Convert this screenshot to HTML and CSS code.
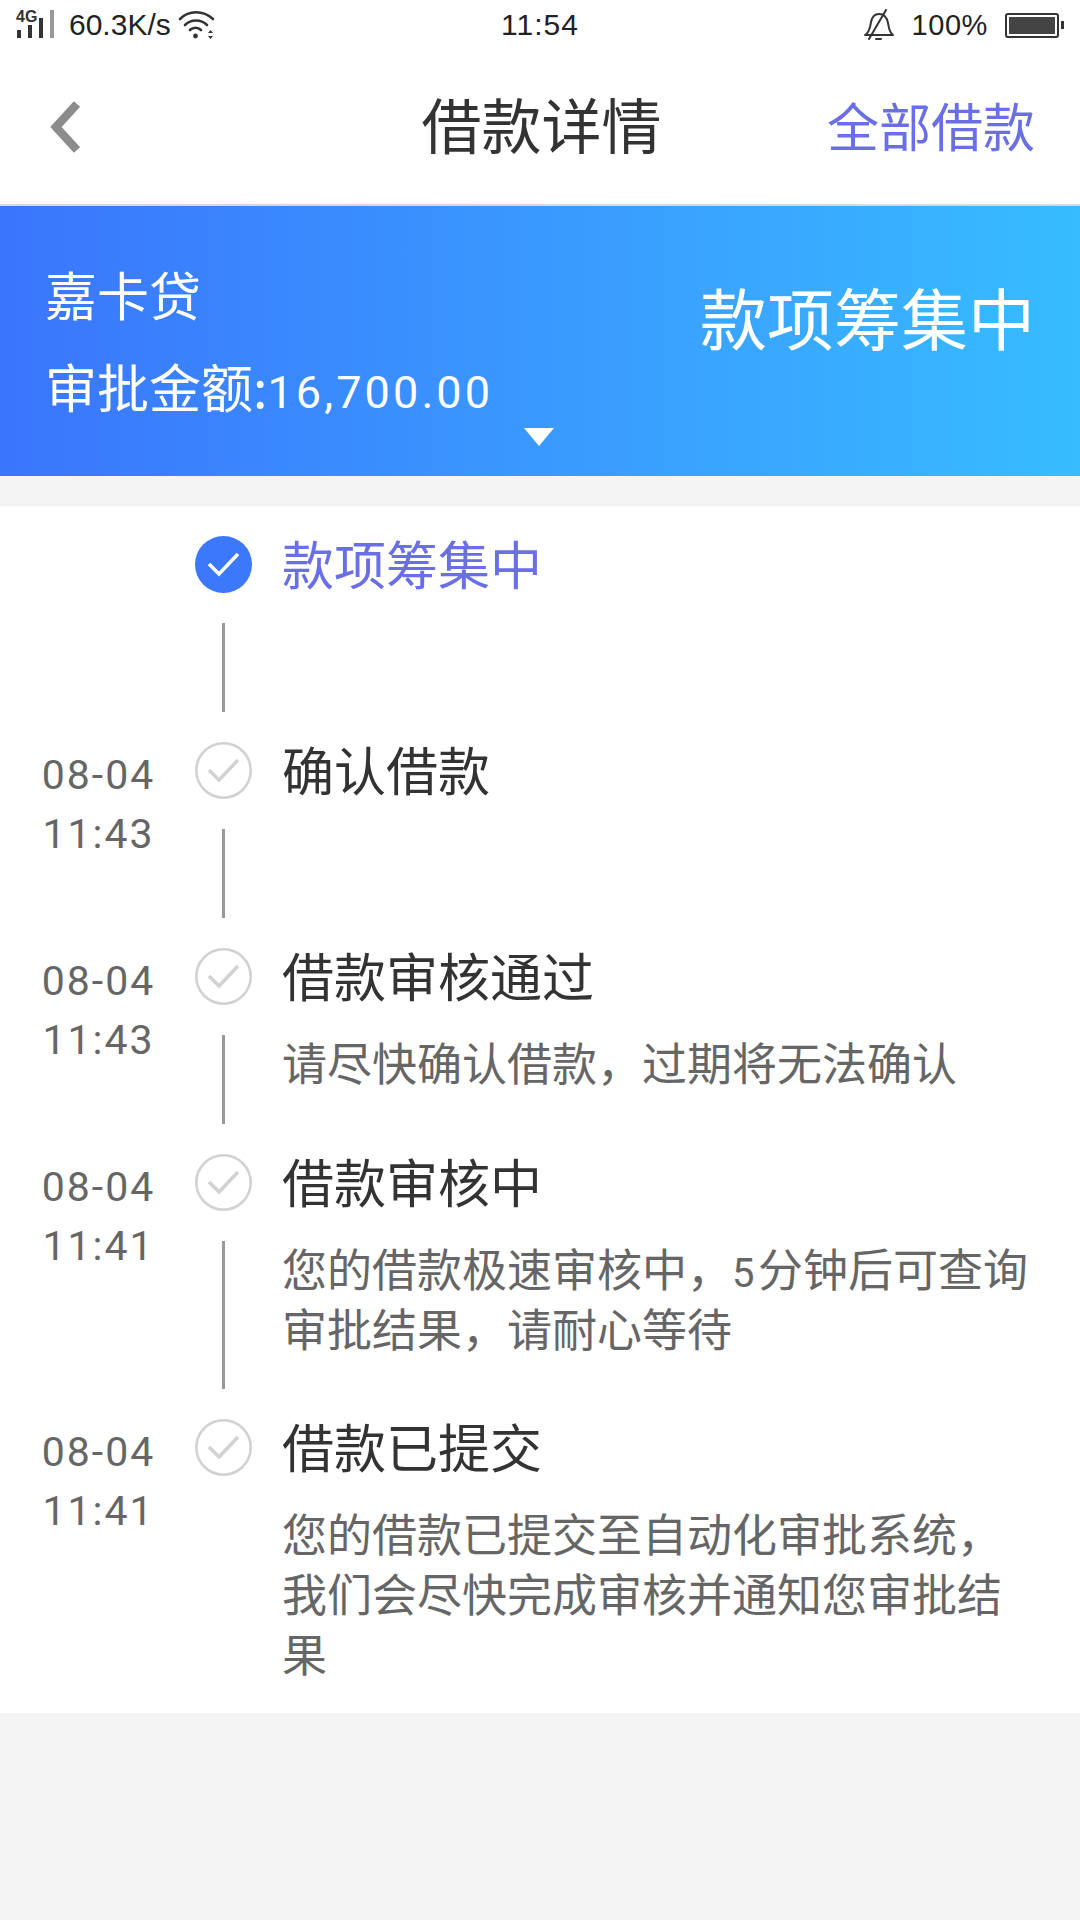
FILE: index.html
```html
<!DOCTYPE html>
<html lang="zh-CN">
<head>
<meta charset="utf-8">
<title>借款详情</title>
<link rel="stylesheet" href="styles.css">
</head>
<body>
<div class="status">
  <div class="status-left">
    <svg class="sig" width="42" height="32" viewBox="0 0 42 32"><text x="0" y="13" class="sig-t">4G</text><rect x="1" y="21" width="4" height="8" fill="#333"/><rect x="12" y="16" width="4" height="13" fill="#333"/><rect x="23" y="9" width="4" height="20" fill="#333"/><rect x="34" y="1" width="4" height="28" fill="#999"/></svg>
    <span class="speed">60.3K/s</span>
    <svg class="wifi" width="38" height="32" viewBox="0 0 38 32" fill="none" stroke="#333" stroke-width="2.6" stroke-linecap="round"><path d="M2 10 C11 1 25 1 35 10"/><path d="M7 16 C13 10 23 10 29 16"/><path d="M12 21 C15 18 20 18 23 21"/><circle cx="17.500" cy="27" r="2.400" fill="#333" stroke="none"/><path d="M30 24l2.500-3 2.500 3zM30 27l2.500 3 2.500-3z" fill="#333" stroke="none"/></svg>
  </div>
  <div class="clock">11:54</div>
  <div class="status-right">
    <svg width="30" height="32" viewBox="0 0 30 32" fill="none" stroke="#333" stroke-width="2" stroke-linecap="round" stroke-linejoin="round"><path d="M1 26 C6 23 6 18 7 13 C8 8 11 5 15 5 C20 5 23 9 24 14 C25 19 25 23 29 26 Z"/><path d="M12 30h5"/><path d="M22 1 L5 30" stroke-width="2"/></svg>
    <span class="pct">100%</span>
    <div class="batt"><div class="batt-fill"></div></div>
    <div class="nub"></div>
  </div>
</div>

<header class="nav">
  <svg class="back" width="34" height="54" viewBox="0 0 34 54" fill="none" stroke="#8c8c8c" stroke-width="8.500"><path d="M29 4 L8 27 L29 50"/></svg>
  <h1 class="title">借款详情</h1>
  <a class="all">全部借款</a>
</header>

<section class="banner">
  <div class="b-left">
    <div class="b-name">嘉卡贷</div>
    <div class="b-amt">审批金额:<span class="b-num">16,700.00</span></div>
  </div>
  <div class="b-state">款项筹集中</div>
  <div class="tri"></div>
</section>

<section class="list">
  <div class="item">
    <div class="time"></div>
    <div class="axis">
      <svg class="ico" viewBox="0 0 57 57"><circle cx="28.500" cy="28.500" r="28.500" fill="#3b78fb"/><path d="M14 28 L24 38 L43 18" fill="none" stroke="#fff" stroke-width="3.500"/></svg>
      <div class="line"></div>
    </div>
    <div class="body"><div class="head active">款项筹集中</div></div>
  </div>
  <div class="item">
    <div class="time">08-04<br>11:43</div>
    <div class="axis">
      <svg class="ico" viewBox="0 0 57 57"><circle cx="28.500" cy="28.500" r="27.200" fill="#fff" stroke="#d2d2d2" stroke-width="2.600"/><path d="M14 28 L24 38 L43 18" fill="none" stroke="#d2d2d2" stroke-width="3.500"/></svg>
      <div class="line"></div>
    </div>
    <div class="body"><div class="head">确认借款</div></div>
  </div>
  <div class="item">
    <div class="time">08-04<br>11:43</div>
    <div class="axis">
      <svg class="ico" viewBox="0 0 57 57"><circle cx="28.500" cy="28.500" r="27.200" fill="#fff" stroke="#d2d2d2" stroke-width="2.600"/><path d="M14 28 L24 38 L43 18" fill="none" stroke="#d2d2d2" stroke-width="3.500"/></svg>
      <div class="line"></div>
    </div>
    <div class="body"><div class="head">借款审核通过</div><p class="desc">请尽快确认借款，过期将无法确认</p></div>
  </div>
  <div class="item">
    <div class="time">08-04<br>11:41</div>
    <div class="axis">
      <svg class="ico" viewBox="0 0 57 57"><circle cx="28.500" cy="28.500" r="27.200" fill="#fff" stroke="#d2d2d2" stroke-width="2.600"/><path d="M14 28 L24 38 L43 18" fill="none" stroke="#d2d2d2" stroke-width="3.500"/></svg>
      <div class="line"></div>
    </div>
    <div class="body"><div class="head">借款审核中</div><p class="desc">您的借款极速审核中，<span class="digit">5</span>分钟后可查询审批结果，请耐心等待</p></div>
  </div>
  <div class="item last">
    <div class="time">08-04<br>11:41</div>
    <div class="axis">
      <svg class="ico" viewBox="0 0 57 57"><circle cx="28.500" cy="28.500" r="27.200" fill="#fff" stroke="#d2d2d2" stroke-width="2.600"/><path d="M14 28 L24 38 L43 18" fill="none" stroke="#d2d2d2" stroke-width="3.500"/></svg>
    </div>
    <div class="body"><div class="head">借款已提交</div><p class="desc">您的借款已提交至自动化审批系统，我们会尽快完成审核并通知您审批结果</p></div>
  </div>
</section>
</body>
</html>
```

FILE: styles.css
```css
* { box-sizing: border-box; }
html, body { margin: 0; padding: 0; }
body {
  width: 1080px;
  height: 1920px;
  background: #f4f4f4;
  font-family: "Noto Sans CJK SC", "Noto Sans", sans-serif;
  color: #333;
  overflow: hidden;
}

.status {
  height: 50px;
  background: #fff;
  display: grid;
  grid-template-columns: 1fr auto 1fr;
  align-items: center;
  padding: 0 16px;
  font-family: "Liberation Sans", Arial, sans-serif;
  font-size: 29px;
  color: #222;
}
.status-left, .status-right { display: flex; align-items: center; }
.status-right { justify-content: flex-end; }
.sig { overflow: visible; }
.sig-t { font: bold 16px "Liberation Sans", Arial, sans-serif; fill: #333; }
.speed { margin-left: 11px; font-size: 30px; }
.wifi { margin-left: 7px; }
.clock { font-size: 30px; letter-spacing: 1px; }
.pct { margin-left: 17px; margin-right: 17px; letter-spacing: .6px; }
.batt {
  width: 54px;
  height: 25px;
  border: 2px solid #333;
  border-radius: 3px;
  padding: 2px;
}
.batt-fill { width: 100%; height: 100%; background: #444; }
.nub { width: 3px; height: 8px; background: #333; margin-left: 2px; }

.nav {
  height: 156px;
  background: #fff;
  border-bottom: 2px solid #d9d9d9;
  display: grid;
  grid-template-columns: 1fr auto 1fr;
  align-items: center;
  padding: 0 45px 0 48px;
}
.back { display: block; }
.title { margin: 0 0 8px; font-size: 60px; font-weight: 400; line-height: 1.2; color: #333; }
.all { justify-self: end; margin-bottom: 4px; font-size: 52px; line-height: 1.2; color: #6a6fe6; }

.banner {
  position: relative;
  height: 270px;
  background: linear-gradient(90deg, #3a75fc 0%, #3aa0ff 60%, #37bcff 100%);
  color: #fff;
  display: flex;
  justify-content: space-between;
  align-items: flex-start;
  padding: 0 45px 0 45px;
}
.b-left { padding-top: 55px; }
.b-name { font-size: 52px; line-height: 66px; }
.b-amt { font-size: 52px; line-height: 66px; margin-top: 26px; white-space: nowrap; }
.b-num { font-family: Roboto, sans-serif; font-size: 45px; letter-spacing: 3.100px; }
.b-state { font-size: 67px; line-height: 90px; margin-top: 65px; }
.tri {
  position: absolute;
  left: 524px;
  top: 222px;
  width: 0;
  height: 0;
  border-left: 15px solid transparent;
  border-right: 15px solid transparent;
  border-top: 18px solid #fff;
}

.list {
  margin-top: 30px;
  background: #fff;
  padding: 30px 46px 30px 0;
}
.item { display: flex; min-height: 206px; }
.time {
  width: 195px;
  flex: none;
  text-align: center;
  font-family: Roboto, sans-serif;
  font-kerning: none;
  font-size: 41px;
  line-height: 59px;
  letter-spacing: 2px;
  color: #666;
  padding: 4px 0 0 2px;
}
.axis {
  width: 57px;
  flex: none;
  display: flex;
  flex-direction: column;
  align-items: center;
}
.ico { width: 57px; height: 57px; flex: none; display: block; }
.line { width: 3px; flex: 1; background: #999; margin: 30px 0; }
.body { flex: 1; min-width: 0; margin-left: 30px; padding-bottom: 61px; }
.last .body { padding-bottom: 0; }
.head { font-size: 52px; line-height: 53px; color: #333; }
.head.active { color: #6a6fe6; }
.desc { margin: 31px 0 0; font-size: 45px; line-height: 60px; color: #666; }
.digit { display: inline-block; font-family: Roboto, sans-serif; font-size: 40px; line-height: 40px; letter-spacing: 3.500px; }
```
